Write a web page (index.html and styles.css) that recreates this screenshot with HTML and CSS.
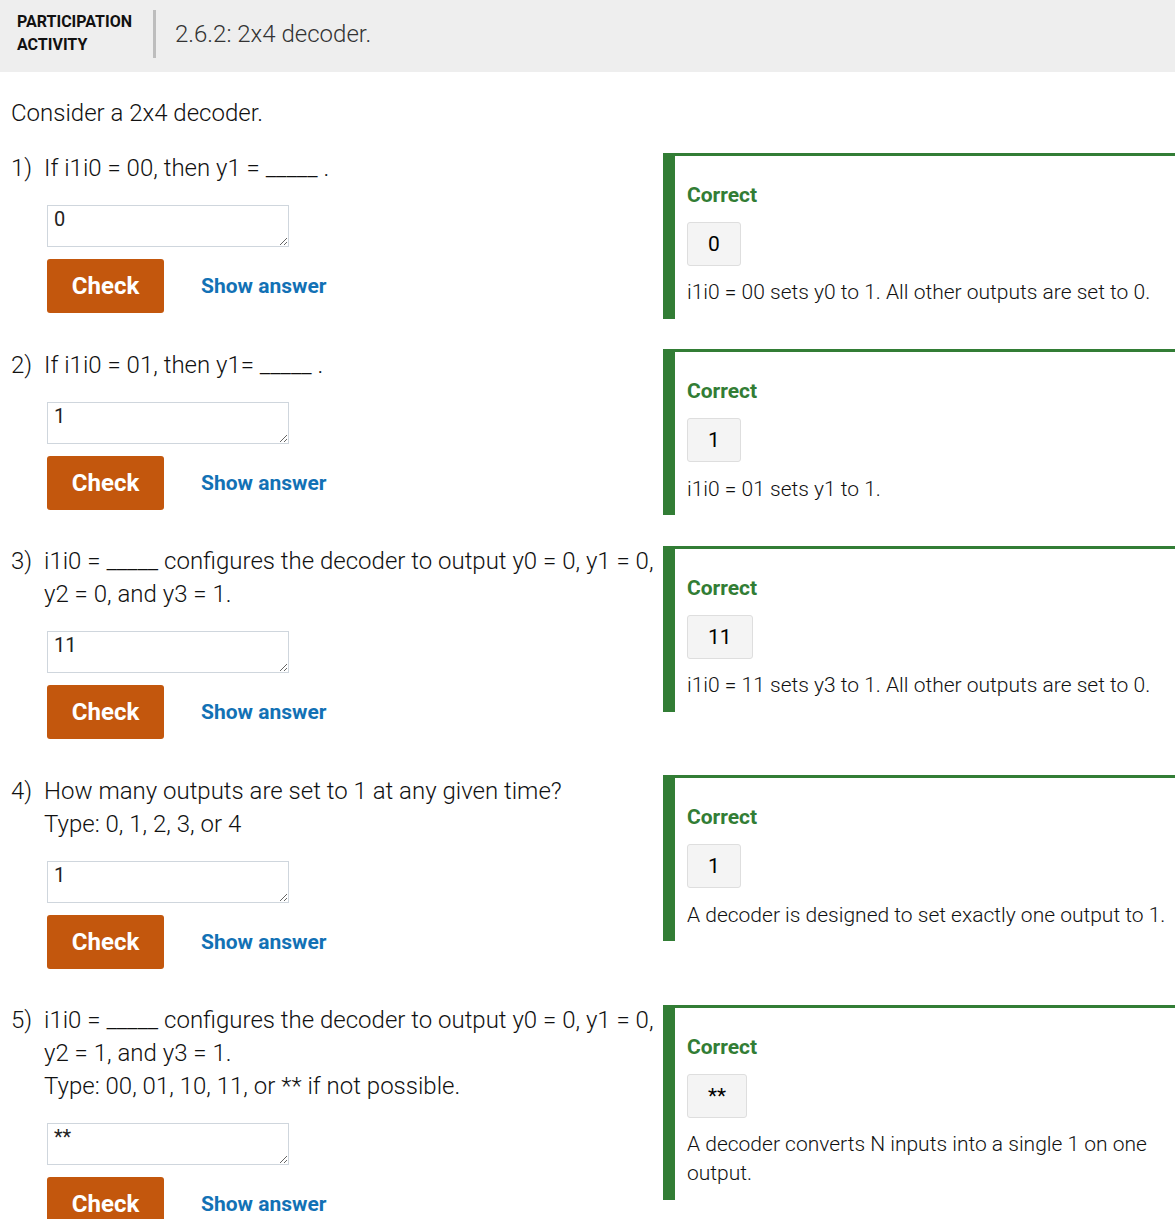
FILE: index.html
```html
<!DOCTYPE html>
<html lang="en">
<head>
<meta charset="utf-8">
<title>2.6.2: 2x4 decoder.</title>
<link rel="stylesheet" href="styles.css">
</head>
<body>
<header class="activity-header">
  <div class="activity-label">PARTICIPATION<br>ACTIVITY</div>
  <div class="activity-divider"></div>
  <h1 class="activity-title">2.6.2: 2x4 decoder.</h1>
</header>
<main class="activity">
  <p class="intro">Consider a 2x4 decoder.</p>

  <div class="question">
    <div class="q-left">
      <div class="q-text"><span class="q-num">1)</span><div class="q-body">If i1i0 = 00, then y1 = _____ .</div></div>
      <div class="q-controls">
        <textarea class="answer-input">0</textarea>
        <div class="q-buttons"><button class="check-btn">Check</button><button class="show-btn">Show answer</button></div>
      </div>
    </div>
    <div class="feedback">
      <div class="fb-title">Correct</div>
      <div class="fb-answer">0</div>
      <div class="fb-expl">i1i0 = 00 sets y0 to 1. All other outputs are set to 0.</div>
    </div>
  </div>

  <div class="question">
    <div class="q-left">
      <div class="q-text"><span class="q-num">2)</span><div class="q-body">If i1i0 = 01, then y1= _____ .</div></div>
      <div class="q-controls">
        <textarea class="answer-input">1</textarea>
        <div class="q-buttons"><button class="check-btn">Check</button><button class="show-btn">Show answer</button></div>
      </div>
    </div>
    <div class="feedback">
      <div class="fb-title">Correct</div>
      <div class="fb-answer">1</div>
      <div class="fb-expl">i1i0 = 01 sets y1 to 1.</div>
    </div>
  </div>

  <div class="question">
    <div class="q-left">
      <div class="q-text"><span class="q-num">3)</span><div class="q-body">i1i0 = _____ configures the decoder to output y0 = 0, y1 = 0, y2 = 0, and y3 = 1.</div></div>
      <div class="q-controls">
        <textarea class="answer-input">11</textarea>
        <div class="q-buttons"><button class="check-btn">Check</button><button class="show-btn">Show answer</button></div>
      </div>
    </div>
    <div class="feedback">
      <div class="fb-title">Correct</div>
      <div class="fb-answer">11</div>
      <div class="fb-expl">i1i0 = 11 sets y3 to 1. All other outputs are set to 0.</div>
    </div>
  </div>

  <div class="question">
    <div class="q-left">
      <div class="q-text"><span class="q-num">4)</span><div class="q-body">How many outputs are set to 1 at any given time?<br>Type: 0, 1, 2, 3, or 4</div></div>
      <div class="q-controls">
        <textarea class="answer-input">1</textarea>
        <div class="q-buttons"><button class="check-btn">Check</button><button class="show-btn">Show answer</button></div>
      </div>
    </div>
    <div class="feedback">
      <div class="fb-title">Correct</div>
      <div class="fb-answer">1</div>
      <div class="fb-expl">A decoder is designed to set exactly one output to 1.</div>
    </div>
  </div>

  <div class="question">
    <div class="q-left">
      <div class="q-text"><span class="q-num">5)</span><div class="q-body">i1i0 = _____ configures the decoder to output y0 = 0, y1 = 0, y2 = 1, and y3 = 1.<br>Type: 00, 01, 10, 11, or ** if not possible.</div></div>
      <div class="q-controls">
        <textarea class="answer-input">**</textarea>
        <div class="q-buttons"><button class="check-btn">Check</button><button class="show-btn">Show answer</button></div>
      </div>
    </div>
    <div class="feedback">
      <div class="fb-title">Correct</div>
      <div class="fb-answer">**</div>
      <div class="fb-expl">A decoder converts N inputs into a single 1 on one output.</div>
    </div>
  </div>
</main>
</body>
</html>
```

FILE: styles.css
```css
html, body {
  margin: 0;
  padding: 0;
  background: #ffffff;
}
body {
  font-family: Roboto, "Liberation Sans", sans-serif;
  color: #111;
}
.activity-header {
  display: flex;
  align-items: center;
  height: 72px;
  background: #eeeeee;
  padding-left: 17px;
  box-sizing: border-box;
}
.activity-label {
  font-weight: 700;
  font-size: 16px;
  line-height: 23px;
  color: #111;
  width: 136px;
  margin-top: -7px;
}
.activity-divider {
  width: 3px;
  height: 48px;
  background: #bdbdbd;
  margin-top: -4px;
}
.activity-title {
  margin: -4px 0 0 19px;
  font-weight: 300;
  font-size: 24px;
  color: #333;
}
.activity {
  padding-left: 11px;
}
.intro {
  margin: 0;
  padding-top: 25px;
  font-size: 24px;
  line-height: 33px;
  font-weight: 300;
  height: 54px;
}
.question {
  display: grid;
  grid-template-columns: 652px 1fr;
  align-items: start;
}
.q-left {
  padding-top: 1px;
  padding-bottom: 34.5px;
}
.q-text {
  display: flex;
  font-size: 24px;
  line-height: 33px;
  font-weight: 300;
}
.q-num {
  width: 33px;
  flex: none;
}
.q-body {
  flex: 1;
}
.q-controls {
  padding-left: 36px;
  padding-top: 20px;
}
.answer-input {
  display: block;
  width: 242px;
  height: 42px;
  box-sizing: border-box;
  border: 1px solid #cfd6dd;
  padding: 1px 6px;
  font-family: Roboto, "Liberation Sans", sans-serif;
  font-size: 20px;
  line-height: 24px;
  color: #222;
  resize: vertical;
  margin: 0;
}
.q-buttons {
  display: flex;
  align-items: center;
  margin-top: 12px;
}
.check-btn {
  width: 117px;
  height: 54px;
  background: #c3570d;
  color: #fff;
  border: none;
  border-radius: 3px;
  font-family: Roboto, "Liberation Sans", sans-serif;
  font-weight: 700;
  font-size: 24px;
  padding: 0;
}
.show-btn {
  margin-left: 37px;
  background: none;
  border: none;
  padding: 0;
  color: #1271b5;
  font-family: Roboto, "Liberation Sans", sans-serif;
  font-weight: 700;
  font-size: 21px;
}
.feedback {
  margin-top: 1.5px;
  border-top: 3px solid #327d35;
  border-left: 12px solid #327d35;
  padding: 27px 4px 11.5px 12px;
}
.fb-title {
  color: #327d35;
  font-weight: 700;
  font-size: 21px;
  line-height: 24px;
}
.fb-answer {
  display: inline-block;
  margin-top: 15px;
  padding: 9px 20px;
  min-width: 12px;
  text-align: center;
  background: #f4f4f4;
  border: 1px solid #dedede;
  border-radius: 3px;
  font-size: 21px;
  line-height: 24px;
  color: #000;
}
.fb-expl {
  margin-top: 12.5px;
  font-size: 21px;
  line-height: 29px;
  font-weight: 300;
  color: #111;
}
```
